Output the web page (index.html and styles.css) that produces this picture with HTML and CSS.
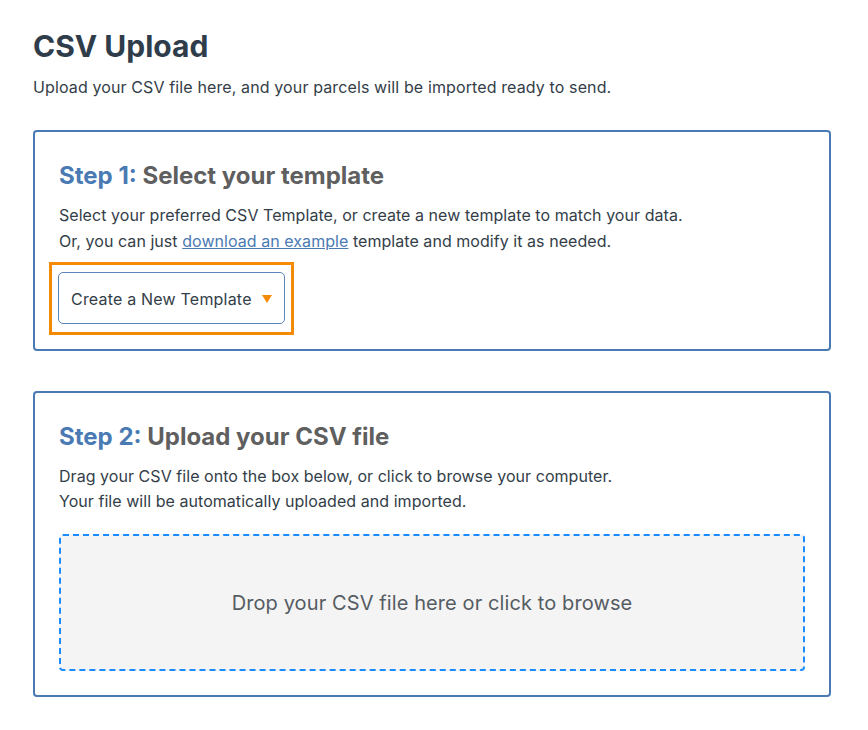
FILE: index.html
```html
<!DOCTYPE html>
<html lang="en">
<head>
<meta charset="utf-8">
<title>CSV Upload</title>
<link rel="stylesheet" href="styles.css">
</head>
<body>
<main class="page">
  <h1 class="title">CSV Upload</h1>
  <p class="intro">Upload your CSV file here, and your parcels will be imported ready to send.</p>

  <section class="card card-first">
    <h2 class="step-title"><span class="step-num">Step 1:</span> Select your template</h2>
    <p class="step-text">Select your preferred CSV Template, or create a new template to match your data.<br>Or, you can just <a class="link" href="#">download an example</a> template and modify it as needed.</p>
    <div class="select-row">
      <div class="focus-ring">
        <button class="select" type="button">Create a New Template <span class="caret"></span></button>
      </div>
    </div>
  </section>

  <section class="card">
    <h2 class="step-title"><span class="step-num">Step 2:</span> Upload your CSV file</h2>
    <p class="step-text step-text-tight">Drag your CSV file onto the box below, or click to browse your computer.<br>Your file will be automatically uploaded and imported.</p>
    <div class="dropzone">Drop your CSV file here or click to browse</div>
  </section>
</main>
</body>
</html>
```
FILE: styles.css
```css
* { box-sizing: border-box; }
html, body { margin: 0; padding: 0; background: #fff; }
body {
  font-family: Inter, "Noto Sans", "Liberation Sans", sans-serif;
  color: #333e48;
}
.page {
  width: 798px;
  margin-left: 33px;
  padding-top: 26px;
}
.title {
  margin: 0;
  font-size: 30px;
  line-height: 40px;
  font-weight: 700;
  color: #2f3d4b;
}
.intro {
  margin: 10px 0 0;
  font-size: 16px;
  line-height: 22px;
  letter-spacing: 0.12px;
  color: #333e48;
}
.card {
  border: 2px solid #4a7ab3;
  border-radius: 4px;
  padding: 29px 24px 24px;
  margin-top: 32px;
}
.card-first { padding-bottom: 14px; }
.card + .card { margin-top: 40px; }
.step-title {
  margin: 0;
  font-size: 24px;
  line-height: 30px;
  font-weight: 700;
  color: #5f5f5f;
}
.step-num { color: #4a7ab3; }
.step-text {
  margin: 11px 0 0;
  font-size: 16px;
  line-height: 26px;
  letter-spacing: 0.05px;
  color: #333e48;
}
.step-text-tight { line-height: 25px; margin-top: 12px; }
.link { color: #4a7ab3; text-decoration: underline; }
.select-row { margin-top: 8px; display: flex; margin-left: -10px; }
.focus-ring {
  border: 3px solid #f58a07;
  padding: 7px 6px 8px;
  display: flex;
}
.select {
  display: flex;
  align-items: center;
  gap: 10px;
  height: 52px;
  padding: 1px 12px 0;
  white-space: nowrap;
  border: 1px solid #5b85b8;
  border-radius: 5px;
  background: #fff;
  font-family: inherit;
  font-size: 16px;
  letter-spacing: 0.2px;
  color: #333e48;
}
.caret {
  width: 0; height: 0;
  border-left: 5px solid transparent;
  border-right: 5px solid transparent;
  border-top: 8px solid #f58a07;
}
.dropzone {
  margin-top: 20px;
  height: 137px;
  border: 2px dashed #1a8cff;
  border-radius: 4px;
  background: #f4f4f4;
  display: flex;
  align-items: center;
  justify-content: center;
  font-size: 20px;
  letter-spacing: 0.1px;
  color: #555c63;
}
```
